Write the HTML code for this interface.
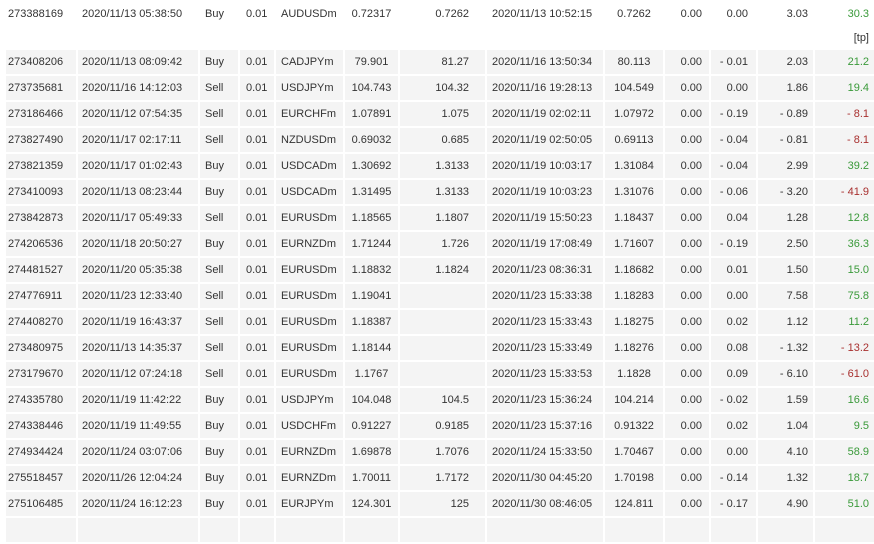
<!DOCTYPE html>
<html><head><meta charset="utf-8"><style>
html,body{margin:0;padding:0;background:#fff;width:874px;height:523px;overflow:hidden}
table{position:absolute;left:4px;top:0;border-collapse:separate;border-spacing:2px;table-layout:fixed;width:874px;font-family:"Liberation Sans",sans-serif;font-size:11px;color:#333}
td{height:24px;padding:0;background:#f4f4f4;white-space:nowrap;overflow:hidden}
tr.w td{background:#fff}
td:nth-child(1){padding-left:2px}
td:nth-child(2){padding-left:4px}
td:nth-child(3){padding-left:5px}
td:nth-child(4){padding-left:6px}
td:nth-child(5){padding-left:5px}
td:nth-child(6){text-align:center}
td:nth-child(7){text-align:right;padding-right:16px}
td:nth-child(8){padding-left:5px}
td:nth-child(9){text-align:center}
td:nth-child(10){text-align:right;padding-right:7px}
td:nth-child(11){text-align:right;padding-right:8px}
td:nth-child(12){text-align:right;padding-right:5px}
td:nth-child(13){text-align:right;padding-right:7px}
.g{color:#3a9a3a}.r{color:#a8302f}
tr.t td{height:20px}
</style></head><body>
<table>
<colgroup><col style="width:70px"><col style="width:120px"><col style="width:38px"><col style="width:34px"><col style="width:67px"><col style="width:53px"><col style="width:85px"><col style="width:116px"><col style="width:58px"><col style="width:44px"><col style="width:45px"><col style="width:55px"><col style="width:61px"></colgroup>
<tr class="w"><td>273388169</td><td>2020/11/13 05:38:50</td><td>Buy</td><td>0.01</td><td>AUDUSDm</td><td>0.72317</td><td>0.7262</td><td>2020/11/13 10:52:15</td><td>0.7262</td><td>0.00</td><td>0.00</td><td>3.03</td><td class="g">30.3</td></tr>
<tr class="w t"><td></td><td></td><td></td><td></td><td></td><td></td><td></td><td></td><td></td><td></td><td></td><td></td><td>[tp]</td></tr>
<tr><td>273408206</td><td>2020/11/13 08:09:42</td><td>Buy</td><td>0.01</td><td>CADJPYm</td><td>79.901</td><td>81.27</td><td>2020/11/16 13:50:34</td><td>80.113</td><td>0.00</td><td>- 0.01</td><td>2.03</td><td class="g">21.2</td></tr>
<tr><td>273735681</td><td>2020/11/16 14:12:03</td><td>Sell</td><td>0.01</td><td>USDJPYm</td><td>104.743</td><td>104.32</td><td>2020/11/16 19:28:13</td><td>104.549</td><td>0.00</td><td>0.00</td><td>1.86</td><td class="g">19.4</td></tr>
<tr><td>273186466</td><td>2020/11/12 07:54:35</td><td>Sell</td><td>0.01</td><td>EURCHFm</td><td>1.07891</td><td>1.075</td><td>2020/11/19 02:02:11</td><td>1.07972</td><td>0.00</td><td>- 0.19</td><td>- 0.89</td><td class="r">- 8.1</td></tr>
<tr><td>273827490</td><td>2020/11/17 02:17:11</td><td>Sell</td><td>0.01</td><td>NZDUSDm</td><td>0.69032</td><td>0.685</td><td>2020/11/19 02:50:05</td><td>0.69113</td><td>0.00</td><td>- 0.04</td><td>- 0.81</td><td class="r">- 8.1</td></tr>
<tr><td>273821359</td><td>2020/11/17 01:02:43</td><td>Buy</td><td>0.01</td><td>USDCADm</td><td>1.30692</td><td>1.3133</td><td>2020/11/19 10:03:17</td><td>1.31084</td><td>0.00</td><td>- 0.04</td><td>2.99</td><td class="g">39.2</td></tr>
<tr><td>273410093</td><td>2020/11/13 08:23:44</td><td>Buy</td><td>0.01</td><td>USDCADm</td><td>1.31495</td><td>1.3133</td><td>2020/11/19 10:03:23</td><td>1.31076</td><td>0.00</td><td>- 0.06</td><td>- 3.20</td><td class="r">- 41.9</td></tr>
<tr><td>273842873</td><td>2020/11/17 05:49:33</td><td>Sell</td><td>0.01</td><td>EURUSDm</td><td>1.18565</td><td>1.1807</td><td>2020/11/19 15:50:23</td><td>1.18437</td><td>0.00</td><td>0.04</td><td>1.28</td><td class="g">12.8</td></tr>
<tr><td>274206536</td><td>2020/11/18 20:50:27</td><td>Buy</td><td>0.01</td><td>EURNZDm</td><td>1.71244</td><td>1.726</td><td>2020/11/19 17:08:49</td><td>1.71607</td><td>0.00</td><td>- 0.19</td><td>2.50</td><td class="g">36.3</td></tr>
<tr><td>274481527</td><td>2020/11/20 05:35:38</td><td>Sell</td><td>0.01</td><td>EURUSDm</td><td>1.18832</td><td>1.1824</td><td>2020/11/23 08:36:31</td><td>1.18682</td><td>0.00</td><td>0.01</td><td>1.50</td><td class="g">15.0</td></tr>
<tr><td>274776911</td><td>2020/11/23 12:33:40</td><td>Sell</td><td>0.01</td><td>EURUSDm</td><td>1.19041</td><td></td><td>2020/11/23 15:33:38</td><td>1.18283</td><td>0.00</td><td>0.00</td><td>7.58</td><td class="g">75.8</td></tr>
<tr><td>274408270</td><td>2020/11/19 16:43:37</td><td>Sell</td><td>0.01</td><td>EURUSDm</td><td>1.18387</td><td></td><td>2020/11/23 15:33:43</td><td>1.18275</td><td>0.00</td><td>0.02</td><td>1.12</td><td class="g">11.2</td></tr>
<tr><td>273480975</td><td>2020/11/13 14:35:37</td><td>Sell</td><td>0.01</td><td>EURUSDm</td><td>1.18144</td><td></td><td>2020/11/23 15:33:49</td><td>1.18276</td><td>0.00</td><td>0.08</td><td>- 1.32</td><td class="r">- 13.2</td></tr>
<tr><td>273179670</td><td>2020/11/12 07:24:18</td><td>Sell</td><td>0.01</td><td>EURUSDm</td><td>1.1767</td><td></td><td>2020/11/23 15:33:53</td><td>1.1828</td><td>0.00</td><td>0.09</td><td>- 6.10</td><td class="r">- 61.0</td></tr>
<tr><td>274335780</td><td>2020/11/19 11:42:22</td><td>Buy</td><td>0.01</td><td>USDJPYm</td><td>104.048</td><td>104.5</td><td>2020/11/23 15:36:24</td><td>104.214</td><td>0.00</td><td>- 0.02</td><td>1.59</td><td class="g">16.6</td></tr>
<tr><td>274338446</td><td>2020/11/19 11:49:55</td><td>Buy</td><td>0.01</td><td>USDCHFm</td><td>0.91227</td><td>0.9185</td><td>2020/11/23 15:37:16</td><td>0.91322</td><td>0.00</td><td>0.02</td><td>1.04</td><td class="g">9.5</td></tr>
<tr><td>274934424</td><td>2020/11/24 03:07:06</td><td>Buy</td><td>0.01</td><td>EURNZDm</td><td>1.69878</td><td>1.7076</td><td>2020/11/24 15:33:50</td><td>1.70467</td><td>0.00</td><td>0.00</td><td>4.10</td><td class="g">58.9</td></tr>
<tr><td>275518457</td><td>2020/11/26 12:04:24</td><td>Buy</td><td>0.01</td><td>EURNZDm</td><td>1.70011</td><td>1.7172</td><td>2020/11/30 04:45:20</td><td>1.70198</td><td>0.00</td><td>- 0.14</td><td>1.32</td><td class="g">18.7</td></tr>
<tr><td>275106485</td><td>2020/11/24 16:12:23</td><td>Buy</td><td>0.01</td><td>EURJPYm</td><td>124.301</td><td>125</td><td>2020/11/30 08:46:05</td><td>124.811</td><td>0.00</td><td>- 0.17</td><td>4.90</td><td class="g">51.0</td></tr>
<tr><td></td><td></td><td></td><td></td><td></td><td></td><td></td><td></td><td></td><td></td><td></td><td></td><td></td></tr>
</table>
</body></html>
